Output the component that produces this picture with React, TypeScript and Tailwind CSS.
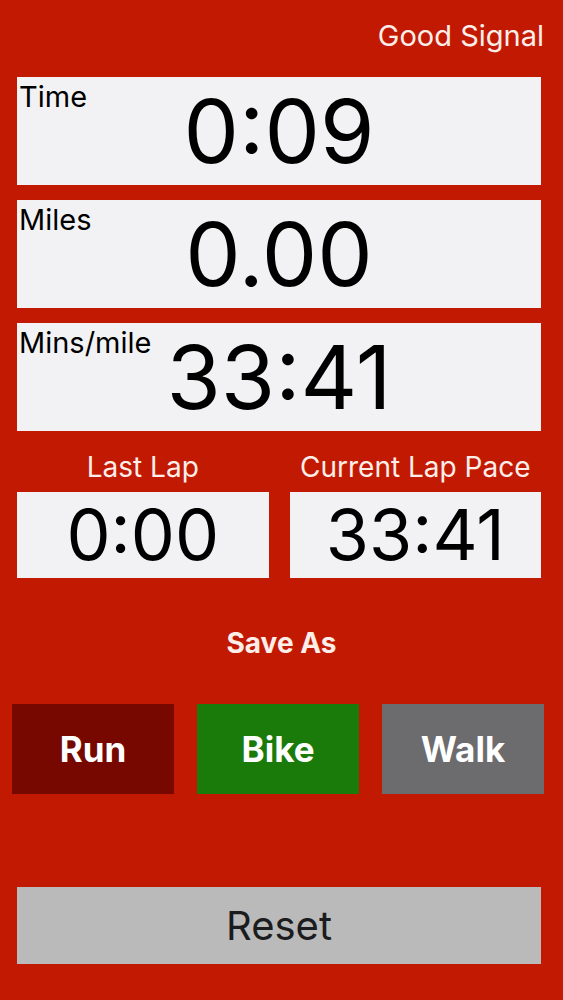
import React from "react";

const font = { fontFamily: "Inter, 'Noto Sans', sans-serif" };

function StatBox({ label, value }: { label: string; value: string }) {
  return (
    <div className="relative flex h-[108px] w-full items-center justify-center bg-[#f2f2f4]">
      <span className="absolute left-[2px] top-[5px] text-[29px] leading-none text-black">{label}</span>
      <span className="text-[88px] leading-none text-black">{value}</span>
    </div>
  );
}

function LapBox({ label, value }: { label: string; value: string }) {
  return (
    <div className="flex flex-col items-center">
      <span className="mb-[11px] text-[28px] leading-none text-[#fdeeea]">{label}</span>
      <div className="flex h-[86px] w-full items-center justify-center bg-[#f2f2f4]">
        <span className="text-[70px] leading-none text-black">{value}</span>
      </div>
    </div>
  );
}

export default function App() {
  return (
    <div style={font} className="flex h-[1000px] w-[563px] flex-col bg-[#c21a02]">
      {/* Status */}
      <div className="flex h-[77px] justify-end pr-[19px] pt-[21px]">
        <span className="text-[29px] leading-none text-[#fdeeea]">Good Signal</span>
      </div>

      {/* Main stats */}
      <div className="ml-[17px] flex w-[524px] flex-col gap-[15px]">
        <StatBox label="Time" value="0:09" />
        <StatBox label="Miles" value="0.00" />
        <StatBox label="Mins/mile" value="33:41" />
      </div>

      {/* Laps */}
      <div className="ml-[17px] mt-[22px] grid w-[524px] grid-cols-2 gap-[21px]">
        <LapBox label="Last Lap" value="0:00" />
        <LapBox label="Current Lap Pace" value="33:41" />
      </div>

      {/* Save as */}
      <div className="mt-[51px] text-center text-[28px] font-bold leading-none text-[#fdeeea]">Save As</div>
      <div className="ml-[12px] mt-[47px] grid w-[532px] grid-cols-3 gap-[23px]">
        <button className="flex h-[90px] items-center justify-center bg-[#760800] text-[35px] font-bold text-white">Run</button>
        <button className="flex h-[90px] items-center justify-center bg-[#1a7a0a] text-[35px] font-bold text-white">Bike</button>
        <button className="flex h-[90px] items-center justify-center bg-[#6c6b6e] text-[35px] font-bold text-white">Walk</button>
      </div>

      {/* Reset */}
      <button className="ml-[17px] mt-[93px] flex h-[77px] w-[524px] items-center justify-center bg-[#bababa] text-[40px] text-[#1c1c1e]">
        Reset
      </button>
    </div>
  );
}
